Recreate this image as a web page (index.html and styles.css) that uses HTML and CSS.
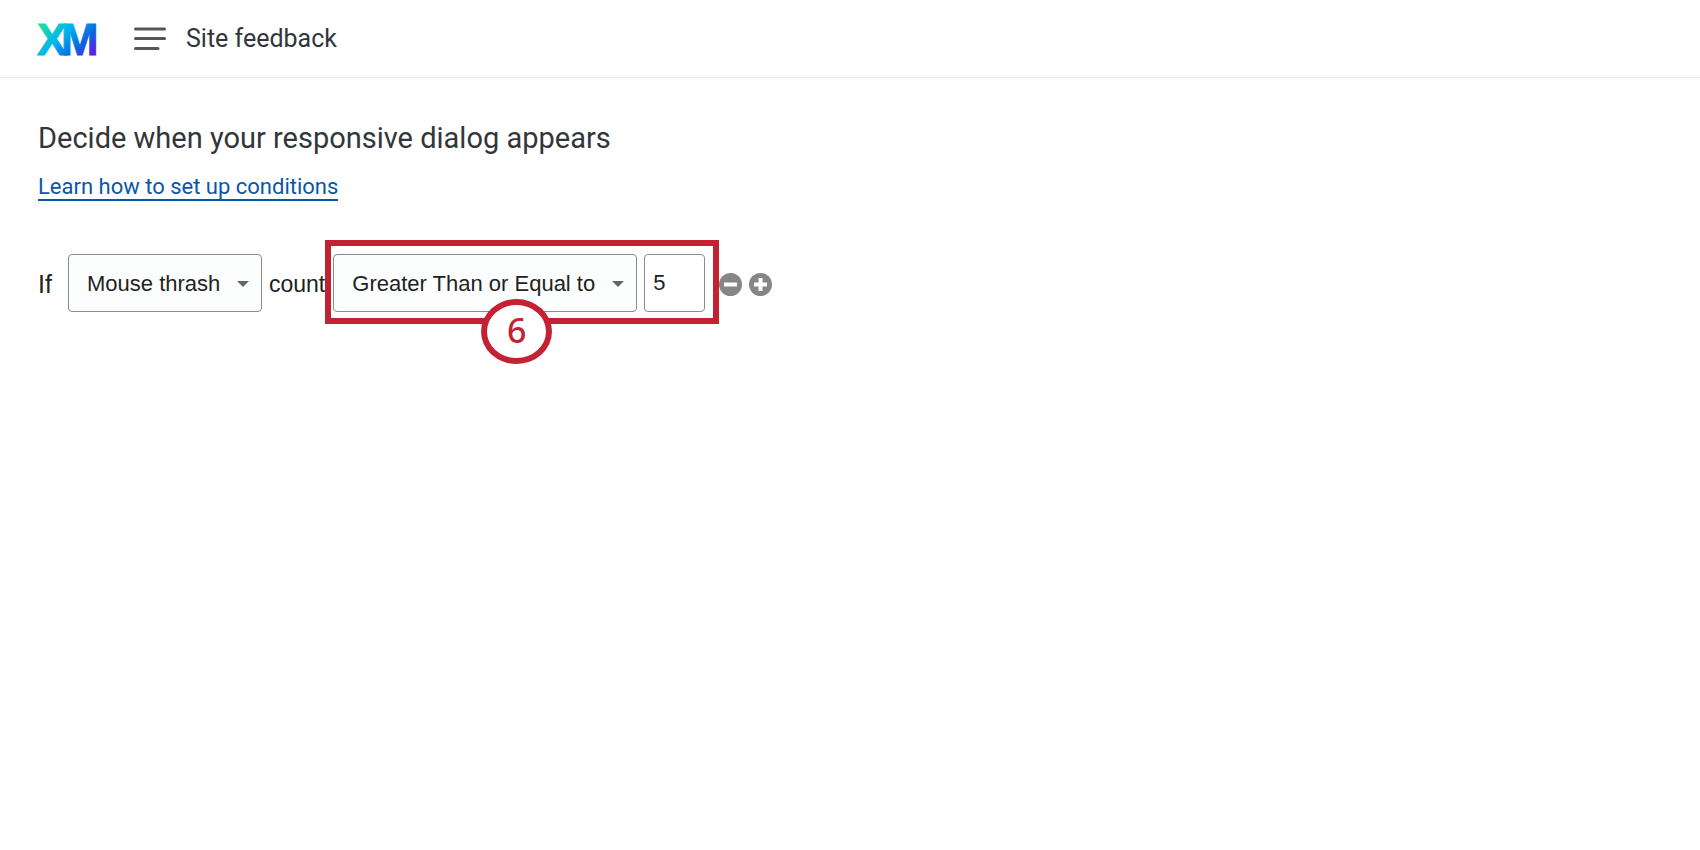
FILE: index.html
```html
<!DOCTYPE html>
<html lang="en">
<head>
    <meta charset="UTF-8">
    <title>Site feedback</title>
    <link rel="stylesheet" href="styles.css">
</head>
<body>
<header class="topbar">
    <a href="#" class="logo">
        <svg width="62" height="56" viewBox="0 0 62 56">
            <defs>
                <linearGradient id="xmFill" gradientUnits="userSpaceOnUse" x1="8" y1="7" x2="54" y2="51">
                    <stop offset="0" stop-color="#21e59a"/>
                    <stop offset="0.4" stop-color="#00b4ef"/>
                    <stop offset="0.7" stop-color="#0768dd"/>
                    <stop offset="0.95" stop-color="#5f1be8"/>
                </linearGradient>
            </defs>
            <text class="logo-text" x="1" y="44" fill="url(#xmFill)" stroke="url(#xmFill)">X<tspan dx="-6">M</tspan></text>
        </svg>
    </a>
    <button type="button" class="menu-btn" aria-label="Menu">
        <svg width="32" height="24" viewBox="0 0 32 24" stroke="#54565b" stroke-width="3" stroke-linecap="round">
            <path d="M1.5 2h29M1.5 11.5h29M1.5 21.5h22.5"/>
        </svg>
    </button>
    <span class="project-name">Site feedback</span>
</header>

<main class="content">
    <h1>Decide when your responsive dialog appears</h1>
    <a href="#" class="help-link">Learn how to set up conditions</a>

    <form class="condition">
        <label class="if-label" for="trigger">If</label>
        <div class="select-box">
            <select id="trigger">
                <option>Mouse thrash</option>
            </select>
        </div>
        <label class="count-label" for="operator">count</label>
        <div class="highlight">
            <div class="select-box">
                <select id="operator">
                    <option>Greater Than or Equal to</option>
                </select>
            </div>
            <input type="text" class="count-input" value="5" aria-label="Count">
            <span class="step">6</span>
        </div>
        <div class="row-actions">
            <button type="button" class="icon-btn" aria-label="Remove condition">
                <svg width="23" height="23" viewBox="0 0 23 23">
                    <circle cx="11.5" cy="11.5" r="11.5" fill="#868686"/>
                    <path d="M5 11.5h13" stroke="#fff" stroke-width="4"/>
                </svg>
            </button>
            <button type="button" class="icon-btn" aria-label="Add condition">
                <svg width="23" height="23" viewBox="0 0 23 23">
                    <circle cx="11.5" cy="11.5" r="11.5" fill="#868686"/>
                    <path d="M5 11.5h13M11.5 5v13" stroke="#fff" stroke-width="4"/>
                </svg>
            </button>
        </div>
    </form>
</main>
</body>
</html>
```

FILE: styles.css
```css
body {
    margin: 0;
    font-family: Roboto, Arial, sans-serif;
    background-color: #fff;
    color: #32363a;
}

.topbar {
    display: flex;
    align-items: center;
    height: 77px;
    padding: 0 36px;
    border-bottom: 1px solid #ebebeb;
}

.logo {
    display: flex;
}

.logo-text {
    font-family: "Liberation Sans", Arial, sans-serif;
    font-size: 45px;
    font-weight: bold;
}

button {
    display: flex;
    padding: 0;
    border: none;
    background: none;
    cursor: pointer;
}

.menu-btn {
    margin-left: 36px;
}

.menu-btn path {
    fill: none;
}

.project-name {
    margin-left: 20px;
    font-size: 25px;
}

.content {
    padding: 40px 38px;
}

h1 {
    margin: 0 0 16px;
    font-size: 29px;
    font-weight: normal;
    line-height: 40px;
}

.help-link {
    display: inline-block;
    border-bottom: 2px solid #0a57a8;
    color: #0a57a8;
    font-size: 22px;
    line-height: 25px;
    text-decoration: none;
}

.condition {
    display: flex;
    align-items: center;
    margin-top: 41px;
    font-family: "Liberation Sans", Arial, sans-serif;
    font-size: 23px;
    color: #222;
}

.condition label {
    padding-top: 2px;
}

.if-label {
    width: 30px;
    font-size: 25px;
}

.count-label {
    margin-left: 7px;
}

.select-box {
    position: relative;
}

/* dropdown arrow */
.select-box::after {
    content: "";
    position: absolute;
    top: 27px;
    right: 13px;
    border: 6px solid transparent;
    border-top-color: #666;
    border-bottom: none;
    pointer-events: none;
}

select, .count-input {
    display: block;
    box-sizing: border-box;
    height: 58px;
    border: 1px solid #8c8c8c;
    border-radius: 4px;
    background-color: #fcfefe;
    color: #222;
    font-family: inherit;
    font-size: 22px;
}

select {
    appearance: none;
    padding: 0 40px 0 18px;
}

.count-input {
    width: 61px;
    padding: 0 8px;
    background-color: #fff;
}

.highlight {
    position: relative;
    display: flex;
    gap: 7px;
    margin-top: -2px;
    padding: 8px 8px 6px 2px;
    border: 6px solid #c32232;
}

.step {
    position: absolute;
    top: 53px;
    left: 150px;
    display: flex;
    align-items: center;
    justify-content: center;
    box-sizing: border-box;
    width: 71px;
    height: 65px;
    padding-bottom: 4px;
    border: 6px solid #c32232;
    border-radius: 50%;
    background-color: #fff;
    color: #c32232;
    font-family: "Noto Sans", sans-serif;
    font-size: 34px;
    font-weight: 500;
}

.row-actions {
    display: flex;
    gap: 7px;
    padding-top: 3px;
}
```
